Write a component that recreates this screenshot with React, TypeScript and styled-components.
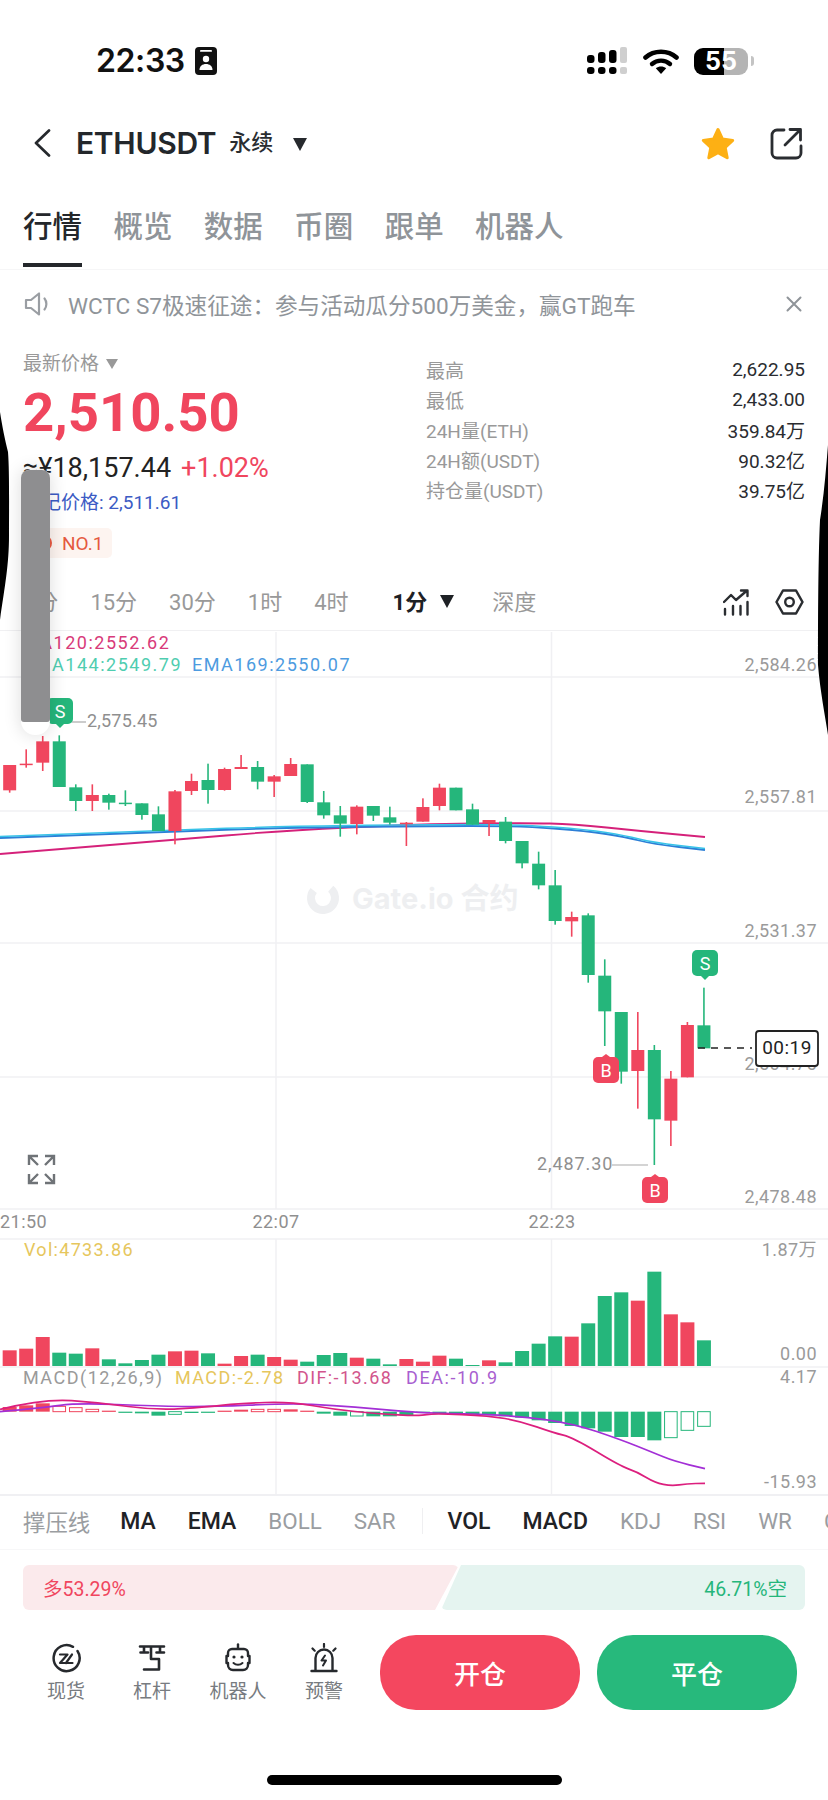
import React from "react";
import styled, { createGlobalStyle } from "styled-components";

const RED = "#f0465e";
const GREEN = "#25b67b";
const FONT = `Roboto, "Noto Sans CJK SC", sans-serif`;

const Global = createGlobalStyle`
  html, body { margin: 0; padding: 0; background: #fff; }
  body { font-family: ${FONT}; color: #222; }
`;

const Page = styled.div`
  position: relative;
  width: 828px;
  height: 1800px;
  overflow: hidden;
  background: #fff;
`;

/* status bar */
const StatusBar = styled.div`
  height: 108px;
  box-sizing: border-box;
  padding: 47px 80px 0 96px;
  display: flex;
  align-items: flex-start;
`;
const Clock = styled.div`
  font: 600 32px/28px Inter, sans-serif;
  letter-spacing: -0.4px;
  color: #111;
`;
const StatusLeft = styled.div`
  display: flex;
  align-items: center;
  gap: 10px;
`;
const StatusRight = styled.div`
  margin-left: auto;
  display: flex;
  align-items: center;
  gap: 15px;
`;
const Battery = styled.div`
  position: relative;
  width: 54px;
  height: 27px;
  border-radius: 9px;
  background: linear-gradient(90deg, #000 55%, #b4b4b4 55%);
  color: #fff;
  font: 700 25px/27px Inter, sans-serif;
  text-align: center;
  &::after {
    content: "";
    position: absolute;
    right: -6px;
    top: 8px;
    width: 3px;
    height: 10px;
    border-radius: 0 3px 3px 0;
    background: #c4c4c4;
  }
`;

/* header */
const Header = styled.div`
  height: 70px;
  box-sizing: border-box;
  padding: 0 25px 0 33px;
  display: flex;
  align-items: center;
`;
const Symbol = styled.div`
  margin-left: 25px;
  font: 600 30px/36px Inter, sans-serif;
  letter-spacing: -0.3px;
  color: #23272b;
`;
const Perp = styled.div`
  margin-left: 13px;
  font-size: 22px;
  line-height: 30px;
  font-weight: 500;
  color: #2a2d31;
`;
const Caret = styled.div<{ $size: number; $color: string; $left: number; $top?: number }>`
  margin-left: ${(p) => p.$left}px;
  margin-top: ${(p) => p.$top ?? 0}px;
  width: 0;
  height: 0;
  border-left: ${(p) => p.$size}px solid transparent;
  border-right: ${(p) => p.$size}px solid transparent;
  border-top: ${(p) => Math.round(p.$size * 1.7)}px solid ${(p) => p.$color};
`;
const HeaderActions = styled.div`
  margin-left: auto;
  display: flex;
  align-items: center;
  gap: 34px;
`;

/* main tabs */
const MainTabs = styled.div`
  height: 92px;
  box-sizing: border-box;
  padding: 0 23px;
  display: flex;
  gap: 31.4px;
  border-bottom: 1px solid #f6f6f7;
`;
const MainTab = styled.div<{ $active?: boolean }>`
  position: relative;
  height: 91px;
  display: flex;
  align-items: flex-start;
  padding-top: 28px;
  box-sizing: border-box;
  font-size: 29.5px;
  line-height: 42px;
  font-weight: 500;
  color: ${(p) => (p.$active ? "#24272b" : "#8f9499")};
  &::after {
    content: "";
    display: ${(p) => (p.$active ? "block" : "none")};
    position: absolute;
    left: 0;
    right: 0;
    top: 85px;
    height: 3.5px;
    background: #24272b;
  }
`;

/* notice */
const Notice = styled.div`
  height: 70px;
  box-sizing: border-box;
  padding: 0 26px 2px 24px;
  display: flex;
  align-items: center;
`;
const NoticeText = styled.div`
  margin-left: 16px;
  font-size: 22.6px;
  color: #8f9499;
  white-space: nowrap;
`;
const NoticeClose = styled.div`
  margin-left: auto;
  display: flex;
`;

/* price section */
const PriceSection = styled.div`
  height: 235px;
  display: flex;
`;
const PriceLeft = styled.div`
  width: 426px;
  box-sizing: border-box;
  padding: 12px 0 0 23px;
  display: flex;
  flex-direction: column;
  align-items: flex-start;
`;
const PriceLabel = styled.div`
  display: flex;
  align-items: center;
  font-size: 19px;
  line-height: 24px;
  color: #999;
`;
const LastPrice = styled.div`
  margin-top: 4px;
  font-size: 54.5px;
  line-height: 64px;
  font-weight: 700;
  color: ${RED};
`;
const FiatLine = styled.div`
  margin-top: 6px;
  font-size: 27px;
  line-height: 36px;
  color: #222;
  white-space: nowrap;
`;
const Change = styled.span`
  margin-left: 10px;
  color: ${RED};
`;
const MarkPrice = styled.div`
  margin-top: 4px;
  font-size: 19px;
  line-height: 26px;
  color: #3c5bc4;
`;
const RankBadge = styled.div`
  margin-top: 12px;
  height: 30px;
  margin-left: 7px;
  width: 82px;
  box-sizing: border-box;
  padding-left: 10px;
  display: flex;
  align-items: center;
  gap: 10px;
  border-radius: 5px;
  background: #fdf4f0;
  color: #e5593f;
  font-size: 19px;
`;
const RankDot = styled.div`
  width: 12px;
  height: 14px;
  border-radius: 50%;
  background: #ea5a43;
`;
const Stats = styled.div`
  width: 379px;
  padding-top: 14px;
`;
const StatRow = styled.div`
  height: 30px;
  display: flex;
  align-items: center;
  justify-content: space-between;
  font-size: 19px;
`;
const StatName = styled.span`
  color: #999;
`;
const StatValue = styled.span`
  color: #2a2c30;
`;

/* interval tabs */
const IntervalBar = styled.div`
  height: 56px;
  box-sizing: border-box;
  padding: 0 24px 6px 24px;
  display: flex;
  align-items: center;
  border-bottom: 1px solid #f0f0f2;
`;
const Interval = styled.div<{ $active?: boolean }>`
  margin-left: ${(p) => (p.$active ? 12 : 0)}px;
  margin-right: ${(p) => (p.$active ? 38 : 32)}px;
  font-size: 22px;
  font-weight: ${(p) => (p.$active ? 700 : 400)};
  color: ${(p) => (p.$active ? "#1e2125" : "#999")};
  white-space: nowrap;
  display: flex;
  align-items: center;
`;
const IntervalIcons = styled.div`
  margin-left: auto;
  margin-top: 5px;
  display: flex;
  align-items: center;
  gap: 26px;
`;

/* chart */
const ChartSvg = styled.svg`
  display: block;
  width: 828px;
  height: 865px;
`;
const ChartText = styled.text<{ $fill: string; $size?: number; $ls?: number }>`
  fill: ${(p) => p.$fill};
  font-family: ${FONT};
  font-size: ${(p) => p.$size ?? 18}px;
  letter-spacing: ${(p) => p.$ls ?? 0.45}px;
  dominant-baseline: central;
  transform: translateY(-1.5px);
`;
const WatermarkText = styled.text`
  fill: #eeeff1;
  font-family: Inter, "Noto Sans CJK SC", sans-serif;
  font-weight: 700;
  font-size: 29px;
  dominant-baseline: central;
`;

/* indicator row */
const IndicatorRow = styled.div`
  height: 54px;
  box-sizing: border-box;
  padding: 0 0 3px 23px;
  display: flex;
  align-items: center;
  gap: 32px;
  overflow: hidden;
  white-space: nowrap;
  border-bottom: 1px solid #f7f7f8;
`;
const Indicator = styled.div<{ $on?: boolean }>`
  font-size: ${(p) => (p.$on ? 23 : 22.4)}px;
  font-weight: ${(p) => (p.$on ? 500 : 400)};
  color: ${(p) => (p.$on ? "#1f2226" : "#9a9da1")};
  &:first-child {
    margin-right: -2px;
  }
`;
const IndicatorDivider = styled.div`
  flex: none;
  width: 1px;
  height: 26px;
  margin: 0 -7px 0 -6px;
  background: #efeff1;
`;

/* long/short */
const Ratio = styled.div`
  margin: 15px 23px 0;
  height: 45px;
  display: flex;
  font-size: 19.5px;
`;
const RatioLong = styled.div`
  width: 436px;
  flex: none;
  box-sizing: border-box;
  padding-left: 20px;
  display: flex;
  align-items: center;
  border-radius: 6px;
  background: #fbeaec;
  color: ${RED};
  clip-path: polygon(0 0, 100% 0, calc(100% - 24px) 100%, 0 100%);
`;
const RatioShort = styled.div`
  flex: 1;
  margin-left: -18px;
  box-sizing: border-box;
  padding-right: 18px;
  display: flex;
  align-items: center;
  justify-content: flex-end;
  border-radius: 6px;
  background: #e5f4f0;
  color: ${GREEN};
  clip-path: polygon(20px 0, 100% 0, 100% 100%, 0 100%);
`;

/* bottom actions */
const Actions = styled.div`
  margin-top: 25px;
  padding-left: 23px;
  display: flex;
  align-items: flex-start;
`;
const NavItem = styled.div`
  width: 86px;
  height: 75px;
  padding-top: 8px;
  box-sizing: border-box;
  display: flex;
  flex-direction: column;
  align-items: center;
  gap: 6px;
  font-size: 19px;
  line-height: 26px;
  color: #777b80;
`;
const TradeButton = styled.div<{ $bg: string; $left: number }>`
  margin-left: ${(p) => p.$left}px;
  width: 200px;
  height: 75px;
  border-radius: 36px;
  background: ${(p) => p.$bg};
  color: #fff;
  font-size: 26px;
  font-weight: 500;
  display: flex;
  align-items: center;
  justify-content: center;
`;
const HomeBar = styled.div`
  margin: 65px auto 0;
  width: 295px;
  height: 10px;
  border-radius: 5px;
  background: #000;
`;

/* overlays */
const EdgeShape = styled.svg`
  position: absolute;
  left: 0;
  top: 0;
  width: 828px;
  height: 1800px;
  pointer-events: none;
`;
const Handle = styled.div`
  position: absolute;
  left: 21px;
  top: 470px;
  width: 29px;
  height: 265px;
  border-radius: 8px 8px 14px 14px;
  background: #fff;
  box-shadow: 0 0 18px rgba(0, 0, 0, 0.14);
`;
const HandleFill = styled.div`
  height: 252px;
  border-radius: 8px 8px 3px 3px;
  background: #8e8e90;
`;

/* data */
const cx = (i: number) => 9.67 + 16.53 * i;
type C = [string, number, number, number, number];
const r = "r", g = "g";
const z3: C[] = [
  [r,252,328,252,335],[r,248,252,205,260],[r,181,245,165,270],[g,181,318,163,318],
  [g,319,360,310,390],[r,342,360,310,390],[g,342,365,338,386],[g,365,369,328,375],
  [g,367,402,367,416],[g,400,450,376,450],[r,331,450,327,490],[r,300,330,278,342],
  [g,297,327,248,368],[r,264,327,260,329],[r,258,264,222,264],[g,258,302,240,325],
  [r,286,302,282,348],[r,249,285,231,285],[g,250,363,250,366],[g,364,403,330,413],
  [g,403,428,375,467],[r,377,429,373,460],[g,375,404,375,420],[g,409,425,377,431],
  [r,425,429,423,495],
];
const z4: C[] = [
  [r,78,122,52,122],[r,20,75,8,88],[g,20,88,20,88],[g,85,131,68,131],[r,117,127,117,165],
  [g,122,180,108,187],[g,180,247,180,262],[g,248,313,212,325],[g,313,420,267,431],
  [r,408,421,392,467],[g,403,582,397,605],[g,584,691,535,795],[g,693,872,693,908],
  [r,807,870,693,983],[g,807,1015,792,1152],[r,893,1019,870,1095],[r,732,889,723,889],
  [g,733,802,620,802],
];
const candles: C[] = [
  ...z3.map((c) => [c[0], 680 + c[1] / 3, 680 + c[2] / 3, 680 + c[3] / 3, 680 + c[4] / 3] as C),
  ...z4.map((c) => [c[0], 780 + c[1] / 3, 780 + c[2] / 3, 780 + c[3] / 3, 780 + c[4] / 3] as C),
];
const vols: [string, number][] = [
  [r,388],[r,383],[r,348],[g,395],[g,398],[r,382],[g,415],[g,427],[g,417],[g,401],[r,391],[r,389],
  [g,397],[r,428],[r,405],[g,401],[r,408],[r,416],[g,422],[g,402],[g,396],[r,410],[g,413],[g,430],
  [r,414],[r,422],[r,404],[g,413],[g,432],[r,418],[g,424],[g,390],[g,368],[g,346],[r,347],[g,307],
  [g,225],[g,214],[r,239],[g,152],[r,280],[r,304],[g,358],
];
/* colour, level in zoom units (zero 572), hollow */
const hist: [string, number, boolean][] = [
  [r,558,false],[r,553,false],[r,547,false],[r,556,true],[r,560,true],[r,565,true],[r,569,false],
  [g,575,false],[g,577,false],[g,584,false],[g,580,true],[g,576,false],[g,575,false],[r,569,false],
  [r,566,false],[r,565,true],[r,565,true],[r,565,false],[r,569,false],[g,578,false],[g,584,false],
  [g,585,true],[g,586,false],[g,586,false],[g,583,false],[g,575,false],[g,578,false],[g,578,false],
  [g,580,false],[g,583,false],[g,586,false],[g,590,false],[g,598,false],[g,606,false],[g,615,false],
  [g,622,false],[g,632,false],[g,648,false],[g,648,false],[g,658,false],[g,650,true],[g,628,true],[g,616,true],
];

type P = [number, number];
const smooth = (pts: P[]) => {
  let d = `M${pts[0][0]} ${pts[0][1]}`;
  for (let i = 1; i < pts.length - 1; i++) {
    const mx = (pts[i][0] + pts[i + 1][0]) / 2;
    const my = (pts[i][1] + pts[i + 1][1]) / 2;
    d += ` Q${pts[i][0]} ${pts[i][1]} ${mx} ${my}`;
  }
  const l = pts[pts.length - 1];
  return d + ` L${l[0]} ${l[1]}`;
};
const z5 = (x: number, y: number): P => [x / 3, 1220 + y / 3];
const z6 = (x: number, y: number): P => [420 + x / 3, 1220 + y / 3];

const emaPink = smooth([[0,853],[175,839],[277,830],[420,823],[527,822],[573,823],[640,830],[705,836]]);
const emaBlue = smooth([[0,837],[175,830.5],[277,827],[420,825],[520,825],[587,830],[625,836],[653,843],[705,849]]);
const dif = smooth([z5(0,565),z5(130,533),z5(300,545),z5(470,568),z5(620,558),z5(720,547),z5(870,542),z5(1000,565),z5(1130,578),z6(0,585),z6(40,577),z6(210,585),z6(300,600),z6(400,635),z6(460,650),z6(600,735),z6(650,752),z6(705,785),z6(755,795),z6(800,788),z6(855,787)]);
const dea = smooth([z5(0,572),z5(130,560),z5(230,546),z5(470,555),z5(620,558),z5(870,547),z5(1000,553),z5(1130,564),z6(0,575),z6(100,577),z6(300,585),z6(460,608),z6(600,655),z6(700,695),z6(760,720),z6(855,743)]);

const Marker = ({ x, y, label, color, tail }: { x: number; y: number; label: string; color: string; tail: "up" | "down" }) => (
  <g>
    <rect x={x} y={y} width={26} height={26} rx={5} fill={color} />
    {tail === "down" ? (
      <path d={`M${x + 9} ${y + 26} L${x + 13} ${y + 30} L${x + 17} ${y + 26} Z`} fill={color} />
    ) : (
      <path d={`M${x + 9} ${y} L${x + 13} ${y - 3} L${x + 17} ${y} Z`} fill={color} />
    )}
    <ChartText x={x + 13} y={y + 14.5} $fill="#fff" $size={18} $ls={0} textAnchor="middle">{label}</ChartText>
  </g>
);

const Chart = () => (
  <ChartSvg viewBox="0 630 828 865">
    {/* grid */}
    <g stroke="#f0f0f3" strokeWidth="1.5">
      {[676, 810, 942, 1076, 1208, 1238, 1366].map((y) => (
        <line key={y} x1="0" x2="828" y1={y} y2={y} />
      ))}
      <line x1="276" x2="276" y1="631" y2="1208" />
      <line x1="551.5" x2="551.5" y1="631" y2="1208" />
      <line x1="276" x2="276" y1="1238" y2="1493" />
      <line x1="551.5" x2="551.5" y1="1238" y2="1493" />
      <line x1="0" x2="828" y1="1494" y2="1494" strokeWidth="2" />
    </g>

    {/* watermark */}
    <circle cx="323" cy="897" r="12" fill="none" stroke="#eeeff1" strokeWidth="8" strokeDasharray="56 20" transform="rotate(-50 323 897)" />
    <WatermarkText x="352" y="897">Gate.io 合约</WatermarkText>

    {/* legends */}
    <ChartText x="23" y="643" $fill="#d83a7a" $ls={1.5}>MA120:2552.62</ChartText>
    <ChartText x="23" y="665" $fill="#4fcdb0" $ls={1.5}>EMA144:2549.79</ChartText>
    <ChartText x="192" y="665" $fill="#4d9be0" $ls={1.5}>EMA169:2550.07</ChartText>

    {/* axis */}
    {[
      ["2,584.26", 665], ["2,557.81", 797], ["2,531.37", 931], ["2,504.75", 1064], ["2,478.48", 1197],
    ].map(([t, y]) => (
      <ChartText key={t as string} x="817" y={y as number} $fill="#9a9a9a" textAnchor="end">{t}</ChartText>
    ))}
    <ChartText x="0" y="1222" $fill="#8f8f8f">21:50</ChartText>
    <ChartText x="276" y="1222" $fill="#8f8f8f" textAnchor="middle">22:07</ChartText>
    <ChartText x="552" y="1222" $fill="#8f8f8f" textAnchor="middle">22:23</ChartText>

    {/* moving averages behind candles */}
    <path d={emaPink} fill="none" stroke="#d5217a" strokeWidth="1.8" />
    <path d={emaBlue} fill="none" stroke="#2d7fd6" strokeWidth="1.8" />
    <path d={emaBlue} fill="none" stroke="#38c3e8" strokeWidth="1.5" transform="translate(0 -1.4)" />

    {/* candles */}
    {candles.map((c, i) => {
      const col = c[0] === "r" ? RED : GREEN;
      const x = cx(i);
      return (
        <g key={i} fill={col}>
          <rect x={x - 0.8} width={1.6} y={c[3]} height={Math.max(c[4] - c[3], 1)} />
          <rect x={x - 6.5} width={13} y={c[1]} height={Math.max(c[2] - c[1], 1.5)} />
        </g>
      );
    })}

    {/* marks */}
    <Marker x={47} y={697} label="S" color={GREEN} tail="down" />
    <line x1="72" x2="86" y1="721" y2="721" stroke="#aaa" strokeWidth="1.2" />
    <ChartText x="87" y="721" $fill="#8f8f8f" $ls={0.2}>2,575.45</ChartText>
    <Marker x={692} y={949} label="S" color={GREEN} tail="down" />
    <Marker x={593} y={1056} label="B" color={RED} tail="up" />
    <Marker x={642} y={1176} label="B" color={RED} tail="up" />
    <ChartText x="537" y="1164" $fill="#8f8f8f" $ls={0.9}>2,487.30</ChartText>
    <line x1="612" x2="648" y1="1164" y2="1164" stroke="#aaa" strokeWidth="1.2" />

    {/* countdown */}
    <line x1="698" x2="752" y1="1047" y2="1047" stroke="#222" strokeWidth="1.6" strokeDasharray="7 6" />
    <rect x="756" y="1030" width="62" height="35" rx="3" fill="#fff" stroke="#222" strokeWidth="1.8" />
    <ChartText x="787" y="1048" $fill="#222" $size={19} textAnchor="middle">00:19</ChartText>

    {/* expand */}
    <g fill="none" stroke="#6f7377" strokeWidth="2.4">
      <path d="M29 1164 V1155 H38 M29 1155 L38 1164" />
      <path d="M45 1155 H54 V1164 M54 1155 L45 1164" />
      <path d="M29 1173 V1182 H38 M29 1182 L38 1173" />
      <path d="M45 1182 H54 V1173 M54 1182 L45 1173" />
    </g>

    {/* volume */}
    <ChartText x="24" y="1250" $fill="#e6c65c" $ls={1.3}>Vol:4733.86</ChartText>
    <ChartText x="817" y="1250" $fill="#9a9a9a" textAnchor="end">1.87万</ChartText>
    <ChartText x="817" y="1354" $fill="#9a9a9a" textAnchor="end">0.00</ChartText>
    {vols.map(([c, t], i) => {
      const top = 1220 + t / 3;
      return <rect key={i} x={cx(i) - 7} width={14} y={top} height={1365 - top} fill={c === "r" ? RED : GREEN} />;
    })}

    {/* macd */}
    <ChartText x="23" y="1378" $fill="#9a9a9a" $ls={1.5}>MACD(12,26,9)</ChartText>
    <ChartText x="175" y="1378" $fill="#e6c65c" $ls={1.4}>MACD:-2.78</ChartText>
    <ChartText x="297" y="1378" $fill="#d2558c" $ls={1.4}>DIF:-13.68</ChartText>
    <ChartText x="406" y="1378" $fill="#a95fd0" $ls={1.6}>DEA:-10.9</ChartText>
    <ChartText x="817" y="1377" $fill="#9a9a9a" textAnchor="end">4.17</ChartText>
    <ChartText x="817" y="1482" $fill="#9a9a9a" textAnchor="end">-15.93</ChartText>
    {hist.map(([c, lv, hollow], i) => {
      const col = c === "r" ? RED : GREEN;
      const zero = 1220 + 572 / 3;
      const y = 1220 + lv / 3;
      const top = Math.min(y, zero);
      const h = Math.max(Math.abs(y - zero), 1.2);
      return hollow ? (
        <rect key={i} x={cx(i) - 6.3} width={12.6} y={top} height={h} fill="#fff" stroke={col} strokeWidth="1" />
      ) : (
        <rect key={i} x={cx(i) - 7} width={14} y={top} height={h} fill={col} />
      );
    })}
    <path d={dea} fill="none" stroke="#a32fd6" strokeWidth="1.7" />
    <path d={dif} fill="none" stroke="#dc1f7e" strokeWidth="1.7" />
  </ChartSvg>
);

export default function App() {
  return (
    <Page>
      <Global />
      <StatusBar>
        <StatusLeft>
          <Clock>22:33</Clock>
          <svg width="22" height="28" viewBox="0 0 22 28">
            <rect width="22" height="28" rx="4" fill="#111" />
            <rect x="5" y="3" width="12" height="1.8" rx="0.9" fill="#fff" />
            <circle cx="11" cy="12" r="3.2" fill="#fff" />
            <path d="M4.5 23c0-4 3-6 6.5-6s6.500 2 6.500 6z" fill="#fff" />
          </svg>
        </StatusLeft>
        <StatusRight>
          <svg width="41" height="28" viewBox="0 0 41 28">
            <g fill="#000">
              <rect x="0" y="8" width="7.500" height="8" rx="3" />
              <rect x="11" y="5" width="7.500" height="11" rx="3" />
              <rect x="22" y="3" width="7.500" height="13" rx="3" />
              <rect x="0" y="20" width="7.500" height="7" rx="3" />
              <rect x="11" y="20" width="7.500" height="7" rx="3" />
              <rect x="22" y="20" width="7.500" height="7" rx="3" />
            </g>
            <g fill="#cfcfcf">
              <rect x="33" y="0" width="7" height="16" rx="2" />
              <rect x="33" y="20" width="7" height="7" rx="2" />
            </g>
          </svg>
          <svg width="36" height="26" viewBox="0 0 36 26">
            <path d="M2.500 9.500C11 1.800 25 1.800 33.500 9.500" fill="none" stroke="#000" strokeWidth="4.600" strokeLinecap="round" />
            <path d="M9 16c5-4.500 13-4.500 18 0" fill="none" stroke="#000" strokeWidth="4.400" strokeLinecap="round" />
            <path d="M12.800 20.200c3-2.400 7.400-2.400 10.400 0L18 26z" fill="#000" />
          </svg>
          <Battery>55</Battery>
        </StatusRight>
      </StatusBar>

      <Header>
        <svg width="18" height="28" viewBox="0 0 18 28">
          <path d="M16 1.500L3 14l13 12.500" fill="none" stroke="#26292d" strokeWidth="2.700" strokeLinecap="round" strokeLinejoin="round" />
        </svg>
        <Symbol>ETHUSDT</Symbol>
        <Perp>永续</Perp>
        <Caret $size={7.5} $color="#26292d" $left={20} $top={2} />
        <HeaderActions>
          <svg width="36" height="34" viewBox="0 0 36 34">
            <path d="M18 3.500l4.500 9.600 10.200 1.300-7.500 7.100 2 10.300-9.200-5.100-9.200 5.100 2-10.300-7.500-7.100 10.200-1.300z" fill="#fdb014" stroke="#fdb014" strokeWidth="3" strokeLinejoin="round" />
          </svg>
          <svg width="33" height="33" viewBox="0 0 33 33">
            <path d="M14 3H7a5 5 0 0 0-5 5v18a5 5 0 0 0 5 5h19a5 5 0 0 0 5-5v-7" fill="none" stroke="#2a2d31" strokeWidth="2.800" strokeLinecap="round" />
            <path d="M15 18L30 3M20 2.500h10.500V13" fill="none" stroke="#2a2d31" strokeWidth="2.800" strokeLinecap="round" strokeLinejoin="round" />
          </svg>
        </HeaderActions>
      </Header>

      <MainTabs>
        <MainTab $active>行情</MainTab>
        <MainTab>概览</MainTab>
        <MainTab>数据</MainTab>
        <MainTab>币圈</MainTab>
        <MainTab>跟单</MainTab>
        <MainTab>机器人</MainTab>
      </MainTabs>

      <Notice>
        <svg width="28" height="24" viewBox="0 0 28 24">
          <path d="M2 8h5l8-6.500v21L7 16H2z" fill="none" stroke="#9a9ea3" strokeWidth="2.200" strokeLinejoin="round" />
          <path d="M20.500 6.500c2.500 3 2.500 8 0 11" fill="none" stroke="#9a9ea3" strokeWidth="2.200" strokeLinecap="round" />
        </svg>
        <NoticeText>WCTC S7极速征途：参与活动瓜分500万美金，赢GT跑车</NoticeText>
        <NoticeClose>
          <svg width="16" height="16" viewBox="0 0 16 16">
            <path d="M1.500 1.500l13 13M14.500 1.500l-13 13" stroke="#8f9499" strokeWidth="2" strokeLinecap="round" />
          </svg>
        </NoticeClose>
      </Notice>

      <PriceSection>
        <PriceLeft>
          <PriceLabel>
            最新价格
            <Caret $size={6} $color="#999" $left={7} />
          </PriceLabel>
          <LastPrice>2,510.50</LastPrice>
          <FiatLine>
            ≈¥18,157.44<Change>+1.02%</Change>
          </FiatLine>
          <MarkPrice>标记价格: 2,511.61</MarkPrice>
          <RankBadge>
            <RankDot />
            NO.1
          </RankBadge>
        </PriceLeft>
        <Stats>
          <StatRow><StatName>最高</StatName><StatValue>2,622.95</StatValue></StatRow>
          <StatRow><StatName>最低</StatName><StatValue>2,433.00</StatValue></StatRow>
          <StatRow><StatName>24H量(ETH)</StatName><StatValue>359.84万</StatValue></StatRow>
          <StatRow><StatName>24H额(USDT)</StatName><StatValue>90.32亿</StatValue></StatRow>
          <StatRow><StatName>持仓量(USDT)</StatName><StatValue>39.75亿</StatValue></StatRow>
        </Stats>
      </PriceSection>

      <IntervalBar>
        <Interval>5分</Interval>
        <Interval>15分</Interval>
        <Interval>30分</Interval>
        <Interval>1时</Interval>
        <Interval>4时</Interval>
        <Interval $active>
          1分
          <Caret $size={7.5} $color="#1e2125" $left={13} $top={4} />
        </Interval>
        <Interval>深度</Interval>
        <IntervalIcons>
          <svg width="26" height="27" viewBox="0 0 26 27">
            <g fill="none" stroke="#2a2d31" strokeWidth="2.400" strokeLinecap="round" strokeLinejoin="round">
              <path d="M1 13l7-7 5 5 11-9.500M18 1.500h6.500V7" />
              <path d="M2 20v5.500M10 17v8.500M17.500 17v8.500M24.500 13v12.500" />
            </g>
          </svg>
          <svg width="29" height="26" viewBox="0 0 29 26">
            <path d="M8 1.500h13L27.500 13 21 24.500H8L1.500 13z" fill="none" stroke="#2a2d31" strokeWidth="2.500" strokeLinejoin="round" />
            <circle cx="14.500" cy="13" r="4.300" fill="none" stroke="#2a2d31" strokeWidth="2.400" />
          </svg>
        </IntervalIcons>
      </IntervalBar>

      <Chart />

      <IndicatorRow>
        <Indicator>撑压线</Indicator>
        <Indicator $on>MA</Indicator>
        <Indicator $on>EMA</Indicator>
        <Indicator>BOLL</Indicator>
        <Indicator>SAR</Indicator>
        <IndicatorDivider />
        <Indicator $on>VOL</Indicator>
        <Indicator $on>MACD</Indicator>
        <Indicator>KDJ</Indicator>
        <Indicator>RSI</Indicator>
        <Indicator>WR</Indicator>
        <Indicator>CCI</Indicator>
      </IndicatorRow>

      <Ratio>
        <RatioLong>多53.29%</RatioLong>
        <RatioShort>46.71%空</RatioShort>
      </Ratio>

      <Actions>
        <NavItem>
          <svg width="30" height="30" viewBox="0 0 30 30">
            <path d="M22 3.800A13 13 0 1 0 26.500 8" fill="none" stroke="#26292d" strokeWidth="2.500" strokeLinecap="round" />
            <path d="M9 11.500h7.500L9 20h6M15 20l6-8.500M14.500 20H21.500" fill="none" stroke="#26292d" strokeWidth="2.200" strokeLinecap="round" strokeLinejoin="round" />
          </svg>
          现货
        </NavItem>
        <NavItem>
          <svg width="30" height="30" viewBox="0 0 30 30">
            <path d="M3 3.500h24M7 3.500v6M3.500 9.500H11M23 3.500v6M19.500 9.500H27M14 3.500V16h8v10.500H7" fill="none" stroke="#26292d" strokeWidth="2.600" strokeLinecap="round" strokeLinejoin="round" />
          </svg>
          杠杆
        </NavItem>
        <NavItem>
          <svg width="30" height="30" viewBox="0 0 30 30">
            <path d="M15 1.500v4" stroke="#26292d" strokeWidth="2.400" strokeLinecap="round" />
            <path d="M9 6h12a4 4 0 0 1 4 4v3h1.500v7H25v2a5 5 0 0 1-5 5h-10a5 5 0 0 1-5-5v-2H3.500v-7H5v-3a4 4 0 0 1 4-4z" fill="none" stroke="#26292d" strokeWidth="2.400" strokeLinejoin="round" />
            <circle cx="11" cy="14" r="1.600" fill="#26292d" />
            <circle cx="19" cy="14" r="1.600" fill="#26292d" />
            <path d="M10.500 20c2.500 2.400 6.500 2.400 9 0" fill="none" stroke="#26292d" strokeWidth="2" strokeLinecap="round" />
          </svg>
          机器人
        </NavItem>
        <NavItem>
          <svg width="30" height="30" viewBox="0 0 30 30">
            <path d="M2.500 28h25M6.500 27.500V15a8.500 8.500 0 0 1 17 0v12.500" fill="none" stroke="#26292d" strokeWidth="2.400" strokeLinecap="round" />
            <path d="M15 1v3M3.500 5.500l2.200 2.200M26.500 5.500l-2.200 2.200" stroke="#26292d" strokeWidth="2.200" strokeLinecap="round" />
            <path d="M16 12.500l-3.500 5h4.500l-3 5" fill="none" stroke="#26292d" strokeWidth="2" strokeLinejoin="round" strokeLinecap="round" />
          </svg>
          预警
        </NavItem>
        <TradeButton $bg="#f4475f" $left={13}>开仓</TradeButton>
        <TradeButton $bg="#27b97c" $left={17}>平仓</TradeButton>
      </Actions>
      <HomeBar />

      <EdgeShape viewBox="0 0 828 1800">
        <path d="M0 412C2 425 5 440 8 452C9.500 470 9 510 9 535C9 565 5 585 0 620Z" fill="#000" />
        <path d="M828 445C826 470 824 495 820 520C818 560 818 640 818 665C820 690 825 715 828 735Z" fill="#000" />
      </EdgeShape>
      <Handle>
        <HandleFill />
      </Handle>
    </Page>
  );
}
